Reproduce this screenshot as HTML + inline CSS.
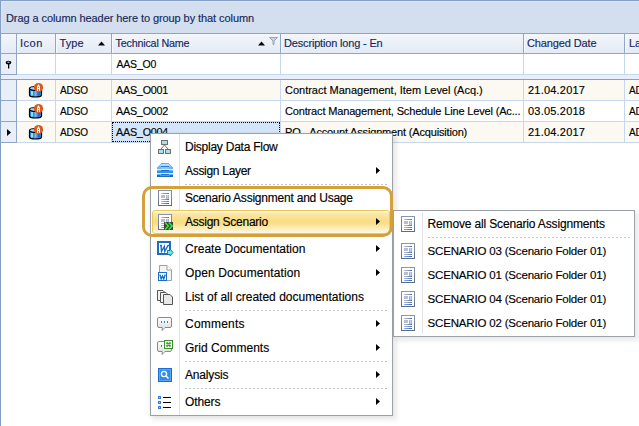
<!DOCTYPE html>
<html><head><meta charset="utf-8">
<style>
*{margin:0;padding:0;box-sizing:border-box}
html,body{width:639px;height:426px;overflow:hidden;background:#fff}
body{position:relative;font-family:"Liberation Sans",sans-serif;}
.a{position:absolute}
svg{position:absolute;overflow:visible}
.t{position:absolute;white-space:pre;line-height:13px;-webkit-text-stroke:0.15px currentColor}
.m{position:absolute;white-space:pre;line-height:14px;-webkit-text-stroke:0.15px currentColor}
</style></head><body>

<svg width="0" height="0" style="position:absolute"><defs>
<linearGradient id="docfr" x1="0" y1="0" x2="0" y2="1"><stop offset="0" stop-color="#8a98ae"/><stop offset="1" stop-color="#5c6b82"/></linearGradient>
<linearGradient id="docln" x1="0" y1="0" x2="1" y2="0"><stop offset="0" stop-color="#b8c4da"/><stop offset="1" stop-color="#5a6ea8"/></linearGradient>
<linearGradient id="bub" x1="0" y1="0" x2="0" y2="1"><stop offset="0" stop-color="#ffffff"/><stop offset="1" stop-color="#e2e2e2"/></linearGradient>
<linearGradient id="docbl" x1="0" y1="0" x2="1" y2="0"><stop offset="0" stop-color="#8ab8f8"/><stop offset="1" stop-color="#2a5ad0"/></linearGradient>
</defs></svg>
<div class="a" style="left:0px;top:0px;width:639px;height:34px;background:#d3deef;border-top:1px solid #849fc3;border-left:1px solid #849fc3;border-bottom:1px solid #8ca6c6"></div>
<div class="a" style="left:1px;top:1px;width:638px;height:1px;background:#dbe6f6;"></div>
<div class="a" style="left:1px;top:1px;width:1px;height:32px;background:#dbe6f6;"></div>
<div class="t" style="left:6px;top:12px;font-size:11px;letter-spacing:-0.079px;color:#15295a">Drag a column header here to group by that column</div>
<div class="a" style="left:0px;top:34px;width:1px;height:392px;background:#849fc3;"></div>
<div class="a" style="left:1px;top:34px;width:638px;height:19px;background:linear-gradient(#f3f6fb,#e4ebf5);"></div>
<div class="a" style="left:1px;top:53px;width:638px;height:1px;background:#8fa7c5;"></div>
<div class="a" style="left:16px;top:34px;width:1px;height:19px;background:#8fa7c5;"></div>
<div class="a" style="left:17px;top:34px;width:1px;height:19px;background:#f7f9fc;"></div>
<div class="a" style="left:55px;top:34px;width:1px;height:19px;background:#8fa7c5;"></div>
<div class="a" style="left:56px;top:34px;width:1px;height:19px;background:#f7f9fc;"></div>
<div class="a" style="left:111px;top:34px;width:1px;height:19px;background:#8fa7c5;"></div>
<div class="a" style="left:112px;top:34px;width:1px;height:19px;background:#f7f9fc;"></div>
<div class="a" style="left:280px;top:34px;width:1px;height:19px;background:#8fa7c5;"></div>
<div class="a" style="left:281px;top:34px;width:1px;height:19px;background:#f7f9fc;"></div>
<div class="a" style="left:523px;top:34px;width:1px;height:19px;background:#8fa7c5;"></div>
<div class="a" style="left:524px;top:34px;width:1px;height:19px;background:#f7f9fc;"></div>
<div class="a" style="left:624px;top:34px;width:1px;height:19px;background:#8fa7c5;"></div>
<div class="a" style="left:625px;top:34px;width:1px;height:19px;background:#f7f9fc;"></div>
<div class="t" style="left:20px;top:37px;font-size:11px;letter-spacing:0.509px;color:#15295a">Icon</div>
<div class="t" style="left:59.5px;top:37px;font-size:11px;letter-spacing:0.090px;color:#15295a">Type</div>
<div class="t" style="left:115.5px;top:37px;font-size:10.75px;letter-spacing:-0.192px;color:#15295a">Technical Name</div>
<div class="t" style="left:284px;top:37px;font-size:11px;letter-spacing:-0.169px;color:#15295a">Description long - En</div>
<div class="t" style="left:527px;top:37px;font-size:11px;letter-spacing:-0.120px;color:#15295a">Changed Date</div>
<div class="t" style="left:629px;top:37px;font-size:11px;letter-spacing:0.000px;color:#15295a">La</div>
<svg style="left:98px;top:41px" width="8" height="5"><path d="M0 4.5 L3.5 0.5 L7 4.5Z" fill="#000"/></svg>
<svg style="left:258px;top:41px" width="8" height="5"><path d="M0 4.5 L3.5 0.5 L7 4.5Z" fill="#000"/></svg>
<svg style="left:269px;top:37px" width="9" height="8"><path d="M0.5 0.5 H8.5 L5 4 V7.5 H4 V4 Z" fill="#c8d2de" stroke="#97a6b8" stroke-width="1"/></svg>
<div class="a" style="left:1px;top:54px;width:15px;height:20px;background:#e9eff9;"></div>
<div class="a" style="left:16px;top:54px;width:1px;height:21px;background:#8fa7c5;"></div>
<div class="a" style="left:1px;top:74px;width:15px;height:1px;background:#8fa7c5;"></div>
<div class="a" style="left:17px;top:74px;width:622px;height:1px;background:#c6d8f0;"></div>
<div class="a" style="left:55px;top:54px;width:1px;height:20px;background:#c6d8f0;"></div>
<div class="a" style="left:111px;top:54px;width:1px;height:20px;background:#c6d8f0;"></div>
<div class="a" style="left:280px;top:54px;width:1px;height:20px;background:#c6d8f0;"></div>
<div class="a" style="left:523px;top:54px;width:1px;height:20px;background:#c6d8f0;"></div>
<div class="a" style="left:624px;top:54px;width:1px;height:20px;background:#c6d8f0;"></div>
<svg style="left:5px;top:60px" width="8" height="10"><ellipse cx="3.5" cy="2.6" rx="2.8" ry="1.9" fill="#000"/><ellipse cx="3.5" cy="2.2" rx="1.3" ry="0.6" fill="#bbb"/><rect x="3" y="3.5" width="1.3" height="5" fill="#000"/></svg>
<div class="t" style="left:116.5px;top:58px;font-size:10.5px;letter-spacing:-0.203px;color:#000">AAS_O0</div>
<div class="a" style="left:1px;top:75px;width:638px;height:4px;background:#e8eefa;"></div>
<div class="a" style="left:1px;top:79px;width:638px;height:1px;background:#8aa2c2;"></div>
<div class="a" style="left:17px;top:80px;width:622px;height:20px;background:#fbf9f1;"></div>
<div class="a" style="left:1px;top:80px;width:15px;height:20px;background:#e9eff9;"></div>
<div class="a" style="left:1px;top:100px;width:15px;height:1px;background:#8fa7c5;"></div>
<div class="a" style="left:17px;top:100px;width:622px;height:1px;background:#c6d8f0;"></div>
<div class="a" style="left:55px;top:80px;width:1px;height:20px;background:#c6d8f0;"></div>
<div class="a" style="left:111px;top:80px;width:1px;height:20px;background:#c6d8f0;"></div>
<div class="a" style="left:280px;top:80px;width:1px;height:20px;background:#c6d8f0;"></div>
<div class="a" style="left:523px;top:80px;width:1px;height:20px;background:#c6d8f0;"></div>
<div class="a" style="left:624px;top:80px;width:1px;height:20px;background:#c6d8f0;"></div>
<div class="a" style="left:17px;top:101px;width:622px;height:20px;background:#ffffff;"></div>
<div class="a" style="left:1px;top:101px;width:15px;height:20px;background:#e9eff9;"></div>
<div class="a" style="left:1px;top:121px;width:15px;height:1px;background:#8fa7c5;"></div>
<div class="a" style="left:17px;top:121px;width:622px;height:1px;background:#c6d8f0;"></div>
<div class="a" style="left:55px;top:101px;width:1px;height:20px;background:#c6d8f0;"></div>
<div class="a" style="left:111px;top:101px;width:1px;height:20px;background:#c6d8f0;"></div>
<div class="a" style="left:280px;top:101px;width:1px;height:20px;background:#c6d8f0;"></div>
<div class="a" style="left:523px;top:101px;width:1px;height:20px;background:#c6d8f0;"></div>
<div class="a" style="left:624px;top:101px;width:1px;height:20px;background:#c6d8f0;"></div>
<div class="a" style="left:17px;top:122px;width:622px;height:20px;background:#fbf9f1;"></div>
<div class="a" style="left:1px;top:122px;width:15px;height:20px;background:#e9eff9;"></div>
<div class="a" style="left:1px;top:142px;width:15px;height:1px;background:#8fa7c5;"></div>
<div class="a" style="left:17px;top:142px;width:622px;height:1px;background:#c6d8f0;"></div>
<div class="a" style="left:55px;top:122px;width:1px;height:20px;background:#c6d8f0;"></div>
<div class="a" style="left:111px;top:122px;width:1px;height:20px;background:#c6d8f0;"></div>
<div class="a" style="left:280px;top:122px;width:1px;height:20px;background:#c6d8f0;"></div>
<div class="a" style="left:523px;top:122px;width:1px;height:20px;background:#c6d8f0;"></div>
<div class="a" style="left:624px;top:122px;width:1px;height:20px;background:#c6d8f0;"></div>
<div class="a" style="left:16px;top:80px;width:1px;height:63px;background:#8fa7c5;"></div>
<svg style="left:7px;top:129px" width="5" height="8"><path d="M0 0 L4 3.5 L0 7Z" fill="#000"/></svg>
<div class="a" style="left:112px;top:122px;width:168px;height:20px;background:#d5e5f9;border:1px dotted #000"></div>
<div class="t" style="left:60px;top:84px;font-size:10.0px;letter-spacing:-0.121px;color:#000">ADSO</div>
<div class="t" style="left:116px;top:84px;font-size:10.75px;letter-spacing:-0.215px;color:#000">AAS_O001</div>
<div class="t" style="left:285px;top:84px;font-size:11px;letter-spacing:-0.009px;color:#000">Contract Management, Item Level (Acq.)</div>
<div class="t" style="left:528px;top:84px;font-size:11px;letter-spacing:0.207px;color:#000">21.04.2017</div>
<div class="t" style="left:629px;top:84px;font-size:10.0px;letter-spacing:-0.121px;color:#000">ADSO</div>
<svg style="left:28px;top:82px" width="16" height="16">
<path d="M1.5 6.5 v6.5 q0 2 6 2 q6 0 6 -2 v-6.5" fill="#2f8fe8" stroke="#000" stroke-width="1.2"/>
<rect x="3" y="9" width="2" height="4.5" fill="#7fe8ff"/>
<rect x="6.5" y="9" width="2" height="5" fill="#a0a8d8"/>
<rect x="10" y="9" width="2" height="4.5" fill="#1a70d0"/>
<ellipse cx="7.5" cy="6.5" rx="6" ry="2" fill="#9fd4ff" stroke="#000" stroke-width="1.2"/>
<circle cx="10.5" cy="5.6" r="4.6" fill="#d9581a"/>
<path d="M9.5 9 V5 L10.5 3.2 L11.5 5 V9 M9.5 6.5 H11.5" fill="none" stroke="#fff" stroke-width="1.1"/>
</svg>
<div class="t" style="left:60px;top:105px;font-size:10.0px;letter-spacing:-0.121px;color:#000">ADSO</div>
<div class="t" style="left:116px;top:105px;font-size:10.75px;letter-spacing:-0.215px;color:#000">AAS_O002</div>
<div class="t" style="left:285px;top:105px;font-size:11px;letter-spacing:-0.156px;color:#000">Contract Management, Schedule Line Level (Ac...</div>
<div class="t" style="left:528px;top:105px;font-size:11px;letter-spacing:0.207px;color:#000">03.05.2018</div>
<div class="t" style="left:629px;top:105px;font-size:10.0px;letter-spacing:-0.121px;color:#000">ADSO</div>
<svg style="left:28px;top:103px" width="16" height="16">
<path d="M1.5 6.5 v6.5 q0 2 6 2 q6 0 6 -2 v-6.5" fill="#2f8fe8" stroke="#000" stroke-width="1.2"/>
<rect x="3" y="9" width="2" height="4.5" fill="#7fe8ff"/>
<rect x="6.5" y="9" width="2" height="5" fill="#a0a8d8"/>
<rect x="10" y="9" width="2" height="4.5" fill="#1a70d0"/>
<ellipse cx="7.5" cy="6.5" rx="6" ry="2" fill="#9fd4ff" stroke="#000" stroke-width="1.2"/>
<circle cx="10.5" cy="5.6" r="4.6" fill="#d9581a"/>
<path d="M9.5 9 V5 L10.5 3.2 L11.5 5 V9 M9.5 6.5 H11.5" fill="none" stroke="#fff" stroke-width="1.1"/>
</svg>
<div class="t" style="left:60px;top:126px;font-size:10.0px;letter-spacing:-0.121px;color:#000">ADSO</div>
<div class="t" style="left:116px;top:126px;font-size:10.75px;letter-spacing:-0.215px;color:#000">AAS_O004</div>
<div class="t" style="left:285px;top:126px;font-size:11px;letter-spacing:-0.168px;color:#000">PO - Account Assignment (Acquisition)</div>
<div class="t" style="left:528px;top:126px;font-size:11px;letter-spacing:0.207px;color:#000">21.04.2017</div>
<div class="t" style="left:629px;top:126px;font-size:10.0px;letter-spacing:-0.121px;color:#000">ADSO</div>
<svg style="left:28px;top:124px" width="16" height="16">
<path d="M1.5 6.5 v6.5 q0 2 6 2 q6 0 6 -2 v-6.5" fill="#2f8fe8" stroke="#000" stroke-width="1.2"/>
<rect x="3" y="9" width="2" height="4.5" fill="#7fe8ff"/>
<rect x="6.5" y="9" width="2" height="5" fill="#a0a8d8"/>
<rect x="10" y="9" width="2" height="4.5" fill="#1a70d0"/>
<ellipse cx="7.5" cy="6.5" rx="6" ry="2" fill="#9fd4ff" stroke="#000" stroke-width="1.2"/>
<circle cx="10.5" cy="5.6" r="4.6" fill="#d9581a"/>
<path d="M9.5 9 V5 L10.5 3.2 L11.5 5 V9 M9.5 6.5 H11.5" fill="none" stroke="#fff" stroke-width="1.1"/>
</svg>
<div class="a" style="left:152px;top:135px;width:245px;height:285px;background:rgba(0,0,0,0.08);filter:blur(2px)"></div>
<div class="a" style="left:150px;top:133px;width:243px;height:283px;background:#fff;border:1px solid #9ca1a9;box-shadow:-1px 0 4px rgba(0,0,0,0.05)"></div>
<div class="a" style="left:179px;top:134px;width:1px;height:281px;background:#e2e3e6;"></div>
<div class="a" style="left:152px;top:210px;width:238px;height:24px;background:linear-gradient(#fef8e2 0px,#fef8e2 1px,#fbe8aa 2px,#f9de88 9px,#f9dd84 12px,#fcecb6 17px,#fef6dc 21px,#fffbee 22px);border:1px solid #f0c858;border-radius:3px"></div>
<div class="m" style="left:185px;top:140px;font-size:12px;letter-spacing:-0.246px;color:#000">Display Data Flow</div>
<div class="m" style="left:185px;top:164px;font-size:12px;letter-spacing:-0.298px;color:#000">Assign Layer</div>
<svg style="left:376px;top:167px" width="5" height="8"><path d="M0 0 L4 3.5 L0 7Z" fill="#000"/></svg>
<div class="a" style="left:185px;top:184px;width:202px;height:1px;background:repeating-linear-gradient(90deg,#c5c5c5 0 2px,transparent 2px 4px)"></div>
<div class="m" style="left:185px;top:191px;font-size:12px;letter-spacing:-0.218px;color:#000">Scenario Assignment and Usage</div>
<div class="m" style="left:185px;top:215px;font-size:12px;letter-spacing:-0.253px;color:#000">Assign Scenario</div>
<svg style="left:376px;top:218px" width="5" height="8"><path d="M0 0 L4 3.5 L0 7Z" fill="#000"/></svg>
<div class="a" style="left:185px;top:235px;width:202px;height:1px;background:repeating-linear-gradient(90deg,#c5c5c5 0 2px,transparent 2px 4px)"></div>
<div class="m" style="left:185px;top:242px;font-size:12px;letter-spacing:0.016px;color:#000">Create Documentation</div>
<svg style="left:376px;top:245px" width="5" height="8"><path d="M0 0 L4 3.5 L0 7Z" fill="#000"/></svg>
<div class="m" style="left:185px;top:266px;font-size:12px;letter-spacing:0.104px;color:#000">Open Documentation</div>
<svg style="left:376px;top:269px" width="5" height="8"><path d="M0 0 L4 3.5 L0 7Z" fill="#000"/></svg>
<div class="m" style="left:185px;top:290px;font-size:12px;letter-spacing:0.004px;color:#000">List of all created documentations</div>
<div class="a" style="left:185px;top:310px;width:202px;height:1px;background:repeating-linear-gradient(90deg,#c5c5c5 0 2px,transparent 2px 4px)"></div>
<div class="m" style="left:185px;top:317px;font-size:12px;letter-spacing:0.212px;color:#000">Comments</div>
<svg style="left:376px;top:320px" width="5" height="8"><path d="M0 0 L4 3.5 L0 7Z" fill="#000"/></svg>
<div class="m" style="left:185px;top:341px;font-size:12px;letter-spacing:0.015px;color:#000">Grid Comments</div>
<svg style="left:376px;top:344px" width="5" height="8"><path d="M0 0 L4 3.5 L0 7Z" fill="#000"/></svg>
<div class="a" style="left:185px;top:361px;width:202px;height:1px;background:repeating-linear-gradient(90deg,#c5c5c5 0 2px,transparent 2px 4px)"></div>
<div class="m" style="left:185px;top:368px;font-size:12px;letter-spacing:-0.169px;color:#000">Analysis</div>
<svg style="left:376px;top:371px" width="5" height="8"><path d="M0 0 L4 3.5 L0 7Z" fill="#000"/></svg>
<div class="a" style="left:185px;top:388px;width:202px;height:1px;background:repeating-linear-gradient(90deg,#c5c5c5 0 2px,transparent 2px 4px)"></div>
<div class="m" style="left:185px;top:395px;font-size:12px;letter-spacing:-0.102px;color:#000">Others</div>
<svg style="left:376px;top:398px" width="5" height="8"><path d="M0 0 L4 3.5 L0 7Z" fill="#000"/></svg>

<svg style="left:158px;top:140px" width="14" height="15">
<path d="M6.5 5 L3 9 M6.5 5 L10 9" stroke="#707070" stroke-width="1"/>
<rect x="3.5" y="0.5" width="6" height="4" fill="#a8e0f0" stroke="#707070"/>
<rect x="0.5" y="9.5" width="5" height="4" fill="#a8e0f0" stroke="#707070"/>
<rect x="7.5" y="9.5" width="5" height="4" fill="#a8e0f0" stroke="#707070"/>
</svg>
<svg style="left:157px;top:163px" width="16" height="14" shape-rendering="crispEdges">
<rect x="4" y="0" width="8" height="1" fill="#5fb0ee"/>
<rect x="3" y="1" width="10" height="1" fill="#7cc0f4"/>
<rect x="4" y="1" width="8" height="1" fill="#b8e0fb"/>
<rect x="2" y="2" width="12" height="1" fill="#7cc0f4"/>
<rect x="3" y="2" width="10" height="1" fill="#b0dcfa"/>
<rect x="1" y="3" width="14" height="1" fill="#7cc0f4"/>
<rect x="4" y="3" width="8" height="1" fill="#2a7ad8"/>
<rect x="0" y="4" width="16" height="2" fill="#6cb8f2"/>
<rect x="4" y="4" width="8" height="2" fill="#8ccaf6"/>
<rect x="0" y="6" width="16" height="1" fill="#d8ecfb"/>
<rect x="0" y="7" width="16" height="1" fill="#6cb8f2"/>
<rect x="4" y="7" width="8" height="1" fill="#1f6ed0"/>
<rect x="0" y="8" width="16" height="2" fill="#3a8ee6"/>
<rect x="0" y="10" width="16" height="1" fill="#d8ecfb"/>
<rect x="0" y="11" width="16" height="1" fill="#6cb8f2"/>
<rect x="4" y="11" width="8" height="1" fill="#2a7ad8"/>
<rect x="0" y="12" width="16" height="2" fill="#1a6ad0"/>
<rect x="3" y="12" width="10" height="1" fill="#4a9aea"/>
</svg>
<svg style="left:158px;top:190px" width="14" height="16" shape-rendering="crispEdges">
<rect x="0" y="0" width="14" height="16" fill="url(#docfr)"/>
<rect x="1" y="1" width="12" height="14" fill="#fff"/>
<rect x="3" y="3" width="8" height="1" fill="url(#docln)"/>
<rect x="3" y="5" width="4" height="3" fill="#b4bfd4"/>
<rect x="8" y="5" width="3" height="4" fill="#a8b4cc"/>
<rect x="9" y="5" width="1" height="4" fill="#c8d0e0"/>
<rect x="3" y="9" width="8" height="1" fill="url(#docln)"/>
<rect x="3" y="11" width="8" height="1" fill="url(#docln)"/>
<rect x="3" y="13" width="8" height="1" fill="url(#docbl)"/>
</svg><svg style="left:158px;top:214px" width="14" height="16" shape-rendering="crispEdges">
<rect x="0" y="0" width="14" height="16" fill="url(#docfr)"/>
<rect x="1" y="1" width="12" height="14" fill="#fff"/>
<rect x="3" y="3" width="8" height="1" fill="url(#docln)"/>
<rect x="3" y="5" width="4" height="3" fill="#b4bfd4"/>
<rect x="8" y="5" width="3" height="4" fill="#a8b4cc"/>
<rect x="9" y="5" width="1" height="4" fill="#c8d0e0"/>
<rect x="3" y="9" width="8" height="1" fill="url(#docln)"/>
<rect x="3" y="11" width="8" height="1" fill="url(#docln)"/>
<rect x="3" y="13" width="8" height="1" fill="url(#docbl)"/>
</svg>
<svg style="left:164px;top:222px" width="9" height="8">
<rect x="0" y="0" width="9" height="8" fill="#404048"/>
<path d="M1 0.6 L4.3 4 L1 7.4 M4.8 0.6 L8.1 4 L4.8 7.4" fill="none" stroke="#28f828" stroke-width="1.5"/>
</svg>
<svg style="left:157px;top:241px" width="17" height="16">
<rect x="1" y="1" width="12" height="12" fill="#fff" stroke="#1a6fc4" stroke-width="2"/>
<path d="M3 4.5 H5 M4 4.5 L4.5 10.5 L7.3 5.5 L7.8 10.5 L11 4.5 H12" fill="none" stroke="#1a6fc4" stroke-width="1.4"/>
<path d="M10.5 9.5 H13 V8 L16 11.5 L13 15 V13.5 H10.5 Z" fill="#70e8f0" stroke="#188098" stroke-width="1"/>
</svg>
<svg style="left:158px;top:265px" width="14" height="16">
<path d="M1.5 0.5 H9 L13.5 5 V15.5 H1.5 Z" fill="#f4f4f4" stroke="#a0a0a0"/>
<path d="M9 0.5 V5 H13.5" fill="#fff" stroke="#a0a0a0"/>
<rect x="0.5" y="7.5" width="8" height="8" fill="#fff" stroke="#1a6fc4"/>
<path d="M1.8 9.5 L3.2 14 L4.5 11 L5.8 14 L7.2 9.5" fill="none" stroke="#1a6fc4" stroke-width="1.4"/>
</svg>
<svg style="left:157px;top:290px" width="17" height="16">
<path d="M0.5 0.5 H6 L8 2.5 V10.5 H0.5 Z" fill="#f2f2f2" stroke="#555"/>
<path d="M3.5 2.5 H9 L11 4.5 V12.5 H3.5 Z" fill="#f2f2f2" stroke="#555"/>
<path d="M6.5 4.5 H13 L15.5 7 V14.5 H6.5 Z" fill="#e8e8e8" stroke="#555"/>
</svg>
<svg style="left:157px;top:317px" width="16" height="15">
<rect x="0.5" y="0.5" width="14" height="10" rx="1.5" fill="url(#bub)" stroke="#8a8a8a"/>
<path d="M5.5 10.5 L5 13.5 L8 10.5" fill="#f0f0f0" stroke="#8a8a8a"/>
<rect x="5.6" y="10" width="2" height="1.2" fill="#f0f0f0"/>
<rect x="4" y="4" width="1" height="2" fill="#2a88c0"/>
<rect x="7" y="4" width="1" height="2" fill="#2a88c0"/>
<rect x="10" y="4" width="1" height="2" fill="#2a88c0"/>
</svg>
<svg style="left:157px;top:340px" width="17" height="15">
<rect x="0.5" y="1.5" width="14" height="10" rx="1.5" fill="url(#bub)" stroke="#8a8a8a"/>
<path d="M5.5 11.5 L5 14.5 L8 11.5" fill="#f0f0f0" stroke="#8a8a8a"/>
<rect x="5.6" y="11" width="2" height="1.2" fill="#f0f0f0"/>
<rect x="4" y="5" width="1" height="2" fill="#2a88c0"/>
<rect x="7.5" y="0.5" width="8" height="8" fill="#fff" stroke="#3d8f2c"/>
<path d="M9.5 2.5 L13.5 6.5 M13.5 2.5 L9.5 6.5" stroke="#4a9a38" stroke-width="1.8"/>
<rect x="10" y="4" width="3" height="1" fill="#9ad08a"/>
</svg>
<svg style="left:158px;top:368px" width="14" height="14">
<rect x="0.5" y="0.5" width="13" height="13" fill="#2f8ae8" stroke="#1a6cd0"/>
<rect x="1.5" y="1.5" width="11" height="11" fill="none" stroke="#5aa8f2"/>
<circle cx="6" cy="6" r="2.6" fill="none" stroke="#fff" stroke-width="1.4"/>
<path d="M8 8 L10.5 10.5" stroke="#fff" stroke-width="1.6"/>
</svg>
<svg style="left:158px;top:396px" width="14" height="13" shape-rendering="crispEdges">
<rect x="0" y="0" width="3" height="3" fill="#3a78e0"/><rect x="1" y="1" width="1" height="1" fill="#a8c8f6"/>
<rect x="0" y="5" width="3" height="3" fill="#3a78e0"/><rect x="1" y="6" width="1" height="1" fill="#a8c8f6"/>
<rect x="0" y="10" width="3" height="3" fill="#3a78e0"/><rect x="1" y="11" width="1" height="1" fill="#a8c8f6"/>
<rect x="5" y="1" width="8" height="1" fill="#000"/>
<rect x="5" y="6" width="8" height="1" fill="#000"/>
<rect x="5" y="11" width="8" height="1" fill="#000"/>
</svg>

<div class="a" style="left:142px;top:186px;width:251px;height:51px;border:3px solid #d4a03c;border-radius:10px"></div>
<div class="a" style="left:395px;top:212px;width:244px;height:129px;background:rgba(0,0,0,0.08);filter:blur(2px)"></div>
<div class="a" style="left:393px;top:210px;width:242px;height:127px;background:#fff;border:1px solid #9ca1a9"></div>
<div class="a" style="left:422px;top:212px;width:1px;height:122px;background:#e2e3e6;"></div>
<div class="m" style="left:427.5px;top:217px;font-size:12px;letter-spacing:-0.152px;color:#000">Remove all Scenario Assignments</div>
<svg style="left:401px;top:216px" width="14" height="16" shape-rendering="crispEdges">
<rect x="0" y="0" width="14" height="16" fill="url(#docfr)"/>
<rect x="1" y="1" width="12" height="14" fill="#fff"/>
<rect x="3" y="3" width="8" height="1" fill="url(#docln)"/>
<rect x="3" y="5" width="4" height="3" fill="#b4bfd4"/>
<rect x="8" y="5" width="3" height="4" fill="#a8b4cc"/>
<rect x="9" y="5" width="1" height="4" fill="#c8d0e0"/>
<rect x="3" y="9" width="8" height="1" fill="url(#docln)"/>
<rect x="3" y="11" width="8" height="1" fill="url(#docln)"/>
<rect x="3" y="13" width="8" height="1" fill="url(#docbl)"/>
</svg>
<div class="a" style="left:428px;top:237px;width:202px;height:1px;background:repeating-linear-gradient(90deg,#c5c5c5 0 2px,transparent 2px 4px)"></div>
<div class="m" style="left:427.5px;top:244px;font-size:11.5px;letter-spacing:-0.172px;color:#000">SCENARIO 03 (Scenario Folder 01)</div>
<svg style="left:401px;top:243px" width="14" height="16" shape-rendering="crispEdges">
<rect x="0" y="0" width="14" height="16" fill="url(#docfr)"/>
<rect x="1" y="1" width="12" height="14" fill="#fff"/>
<rect x="3" y="3" width="8" height="1" fill="url(#docln)"/>
<rect x="3" y="5" width="4" height="3" fill="#b4bfd4"/>
<rect x="8" y="5" width="3" height="4" fill="#a8b4cc"/>
<rect x="9" y="5" width="1" height="4" fill="#c8d0e0"/>
<rect x="3" y="9" width="8" height="1" fill="url(#docln)"/>
<rect x="3" y="11" width="8" height="1" fill="url(#docln)"/>
<rect x="3" y="13" width="8" height="1" fill="url(#docbl)"/>
</svg>
<div class="m" style="left:427.5px;top:268px;font-size:11.5px;letter-spacing:-0.172px;color:#000">SCENARIO 01 (Scenario Folder 01)</div>
<svg style="left:401px;top:267px" width="14" height="16" shape-rendering="crispEdges">
<rect x="0" y="0" width="14" height="16" fill="url(#docfr)"/>
<rect x="1" y="1" width="12" height="14" fill="#fff"/>
<rect x="3" y="3" width="8" height="1" fill="url(#docln)"/>
<rect x="3" y="5" width="4" height="3" fill="#b4bfd4"/>
<rect x="8" y="5" width="3" height="4" fill="#a8b4cc"/>
<rect x="9" y="5" width="1" height="4" fill="#c8d0e0"/>
<rect x="3" y="9" width="8" height="1" fill="url(#docln)"/>
<rect x="3" y="11" width="8" height="1" fill="url(#docln)"/>
<rect x="3" y="13" width="8" height="1" fill="url(#docbl)"/>
</svg>
<div class="m" style="left:427.5px;top:292px;font-size:11.5px;letter-spacing:-0.172px;color:#000">SCENARIO 04 (Scenario Folder 01)</div>
<svg style="left:401px;top:291px" width="14" height="16" shape-rendering="crispEdges">
<rect x="0" y="0" width="14" height="16" fill="url(#docfr)"/>
<rect x="1" y="1" width="12" height="14" fill="#fff"/>
<rect x="3" y="3" width="8" height="1" fill="url(#docln)"/>
<rect x="3" y="5" width="4" height="3" fill="#b4bfd4"/>
<rect x="8" y="5" width="3" height="4" fill="#a8b4cc"/>
<rect x="9" y="5" width="1" height="4" fill="#c8d0e0"/>
<rect x="3" y="9" width="8" height="1" fill="url(#docln)"/>
<rect x="3" y="11" width="8" height="1" fill="url(#docln)"/>
<rect x="3" y="13" width="8" height="1" fill="url(#docbl)"/>
</svg>
<div class="m" style="left:427.5px;top:316px;font-size:11.5px;letter-spacing:-0.172px;color:#000">SCENARIO 02 (Scenario Folder 01)</div>
<svg style="left:401px;top:315px" width="14" height="16" shape-rendering="crispEdges">
<rect x="0" y="0" width="14" height="16" fill="url(#docfr)"/>
<rect x="1" y="1" width="12" height="14" fill="#fff"/>
<rect x="3" y="3" width="8" height="1" fill="url(#docln)"/>
<rect x="3" y="5" width="4" height="3" fill="#b4bfd4"/>
<rect x="8" y="5" width="3" height="4" fill="#a8b4cc"/>
<rect x="9" y="5" width="1" height="4" fill="#c8d0e0"/>
<rect x="3" y="9" width="8" height="1" fill="url(#docln)"/>
<rect x="3" y="11" width="8" height="1" fill="url(#docln)"/>
<rect x="3" y="13" width="8" height="1" fill="url(#docbl)"/>
</svg>
</body></html>
